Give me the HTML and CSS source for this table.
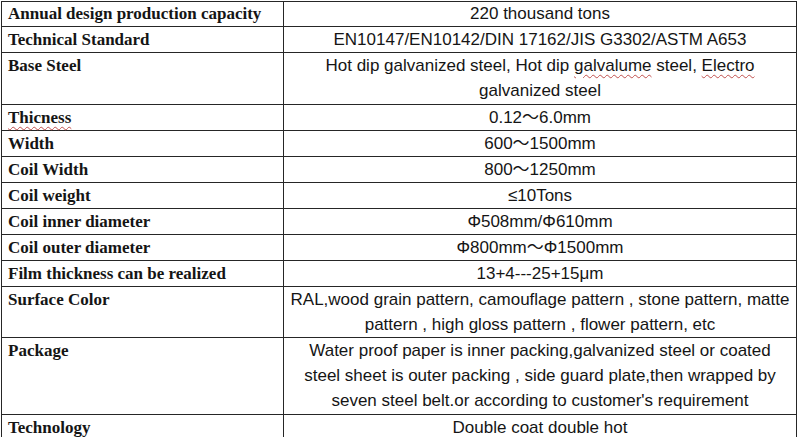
FILE: index.html
```html
<!DOCTYPE html>
<html>
<head>
<meta charset="utf-8">
<link rel="stylesheet" href="styles.css">
</head>
<body>
<table class="spec">
  <tr class="first"><th>Annual design production capacity</th><td>220 thousand tons</td></tr>
  <tr><th>Technical Standard</th><td>EN10147/EN10142/DIN 17162/JIS G3302/ASTM A653</td></tr>
  <tr class="tall"><th>Base Steel</th><td>Hot dip galvanized steel, Hot dip <span class="spell">galvalume</span> steel, <span class="spell">Electro</span><br>galvanized steel</td></tr>
  <tr><th><span class="spell">Thicness</span></th><td>0.12～6.0mm</td></tr>
  <tr><th>Width</th><td>600～1500mm</td></tr>
  <tr><th>Coil Width</th><td>800～1250mm</td></tr>
  <tr><th>Coil weight</th><td>≤10Tons</td></tr>
  <tr><th>Coil inner diameter</th><td>Φ508mm/Φ610mm</td></tr>
  <tr><th>Coil outer diameter</th><td>Φ800mm～Φ1500mm</td></tr>
  <tr><th>Film thickness can be realized</th><td>13+4---25+15μm</td></tr>
  <tr><th>Surface Color</th><td>RAL,wood grain pattern, camouflage pattern , stone pattern, matte<br>pattern , high gloss pattern , flower pattern, etc</td></tr>
  <tr class="tall"><th>Package</th><td>Water proof paper is inner packing,galvanized steel or coated<br>steel sheet is outer packing , side guard plate,then wrapped by<br>seven steel belt.or according to customer's requirement</td></tr>
  <tr><th>Technology</th><td>Double coat double hot</td></tr>
</table>
</body>
</html>
```
FILE: styles.css
```css
html, body {
  margin: 0;
  padding: 0;
  background: #ffffff;
}
body {
  padding: 1px 0 0 1px;
  overflow: hidden;
}
.spec {
  border-collapse: collapse;
  width: 796px;
  table-layout: fixed;
  color: #151515;
}
.spec th, .spec td {
  border: 1px solid #262626;
  padding: 0;
  vertical-align: top;
  line-height: 25px;
}
.spec th {
  width: 275px;
  padding-left: 6px;
  text-align: left;
  font-family: "Liberation Serif", "Times New Roman", serif;
  font-weight: bold;
  font-size: 17px;
}
.spec td {
  text-align: center;
  font-family: "Liberation Sans", Arial, "Noto Sans CJK SC", sans-serif;
  font-size: 17px;
}
.spec .first th, .spec .first td {
  line-height: 24px;
}
.spec .tall th, .spec .tall td {
  padding-bottom: 1px;
}
.spell {
  text-decoration: underline wavy #c0504d;
  text-decoration-thickness: 1px;
  text-underline-offset: 3px;
}
```
